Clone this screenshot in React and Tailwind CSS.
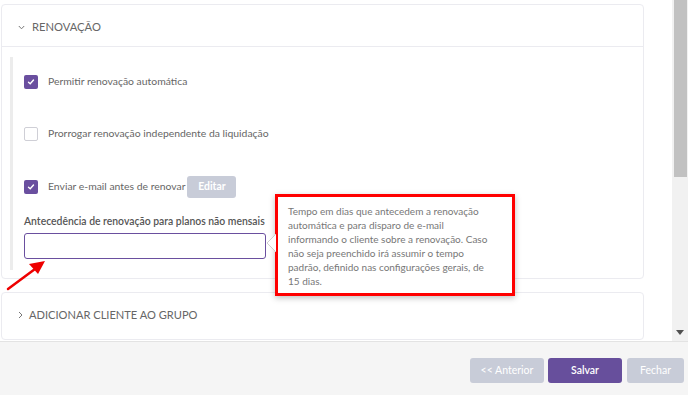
import React from "react";

function Check({ checked }) {
  if (checked) {
    return (
      <div className="w-[14px] h-[14px] rounded-[2px] bg-[#6a4f9f] flex items-center justify-center shrink-0">
        <svg width="8" height="8" viewBox="0 0 8 8">
          <path d="M1.5 4.2 L3.2 5.8 L6.5 2" stroke="white" strokeWidth="1.4" fill="none" strokeLinecap="round" />
        </svg>
      </div>
    );
  }
  return <div className="w-[14px] h-[14px] rounded-[2px] border border-[#cfcfd6] bg-white shrink-0" />;
}

export default function App() {
  return (
    <div className="w-[688px] h-[395px] flex flex-col bg-white overflow-hidden relative text-[#666]" style={{ fontFamily: "Lato, 'Open Sans', sans-serif" }}>
      <div className="h-[341px] flex flex-row">
        <div className="w-[672px] h-[341px] overflow-hidden pl-[1px] pt-[4px] flex flex-col">
          {/* Card 1 */}
          <div className="w-[643px] border border-[#ebebf0] rounded-[4px] bg-white flex flex-col">
            <div className="h-[42px] flex items-center pl-[16px] pt-[3px] border-b border-[#ebebf0]">
              <svg width="7" height="5" viewBox="0 0 7 5" className="mr-[7px]">
                <path d="M0.8 1 L3.5 3.8 L6.2 1" stroke="#777" strokeWidth="1" fill="none" />
              </svg>
              <span className="text-[11.2px] text-[#666]">RENOVAÇÃO</span>
            </div>
            <div className="pl-[8px] pt-[10px] pb-[8px]">
              <div className="border-l-[3px] border-[#ececec] pl-[11px] pt-[18px] pb-[11px] flex flex-col">
                <div className="flex items-center h-[14px]">
                  <Check checked />
                  <span className="ml-[10px] text-[10.4px] text-[#666]">Permitir renovação automática</span>
                </div>
                <div className="flex items-center h-[14px] mt-[38px]">
                  <Check />
                  <span className="ml-[10px] text-[10.4px] text-[#666]">Prorrogar renovação independente da liquidação</span>
                </div>
                <div className="flex items-center h-[22px] mt-[35px]">
                  <Check checked />
                  <span className="ml-[10px] text-[10.4px] text-[#666]">Enviar e-mail antes de renovar</span>
                  <div className="ml-[2px] w-[49px] h-[22px] rounded-[3px] bg-[#c8ccd8] text-white text-[10.4px] font-bold flex items-center justify-center">Editar</div>
                </div>
                <div className="mt-[16px] h-[14px] text-[10.4px] font-semibold text-[#555] leading-[14px] whitespace-nowrap">Antecedência de renovação para planos não mensais</div>
                <div className="mt-[5px] w-[242px] h-[26px] border border-[#6a4f9f] rounded-[3px] bg-white" />
              </div>
            </div>
          </div>
          {/* Card 2 */}
          <div className="mt-[13px] w-[643px] h-[48px] border border-[#ebebf0] rounded-[4px] bg-white flex items-center pl-[16px] pb-[2px]">
            <svg width="5" height="8" viewBox="0 0 5 8" className="mr-[6px]">
              <path d="M1 1 L4 4 L1 7" stroke="#777" strokeWidth="1" fill="none" />
            </svg>
            <span className="text-[11.1px] text-[#666]">ADICIONAR CLIENTE AO GRUPO</span>
          </div>
        </div>
        {/* Scrollbar */}
        <div className="w-[16px] h-[341px] bg-[#f1f1f1] flex flex-col items-center">
          <div className="w-[13px] h-[177px] bg-[#c1c1c1]" />
          <div className="flex-1" />
          <svg width="8" height="5" viewBox="0 0 8 5" className="mb-[6px]">
            <path d="M0 0 L8 0 L4 5 Z" fill="#505050" />
          </svg>
        </div>
      </div>
      {/* Footer */}
      <div className="flex-1 bg-[#f5f5f5] border-t border-[#e3e3e3] flex justify-end items-start pt-[16px] pr-[4px] gap-[4px]">
        <div className="w-[74px] h-[25px] rounded-[3px] bg-[#c8ccd8] text-white text-[10.5px] flex items-center justify-center">&lt;&lt; Anterior</div>
        <div className="w-[74px] h-[25px] rounded-[3px] bg-[#674f9c] text-white text-[10.5px] font-semibold flex items-center justify-center">Salvar</div>
        <div className="ml-[1px] w-[57px] h-[25px] rounded-[3px] bg-[#c8ccd8] text-white text-[10.5px] flex items-center justify-center">Fechar</div>
      </div>

      {/* Tooltip */}
      <div className="absolute left-[275px] top-[194px] w-[240px] h-[102px] border-[3px] border-[#ff0000] bg-white shadow-[0_2px_6px_rgba(0,0,0,0.25)] pl-[10px] pt-[7px] text-[10px] leading-[14px] text-[#777]">
        <div>Tempo em dias que antecedem a renovação</div>
        <div>automática e para disparo de e-mail</div>
        <div>informando o cliente sobre a renovação. Caso</div>
        <div>não seja preenchido irá assumir o tempo</div>
        <div>padrão, definido nas configurações gerais, de</div>
        <div>15 dias.</div>
      </div>
      <svg className="absolute left-[266px] top-[234px]" width="10" height="18" viewBox="0 0 10 18">
        <path d="M10 0 L1 9 L10 18" fill="white" stroke="#cfcfcf" strokeWidth="1" />
      </svg>

      {/* Red arrow */}
      <svg className="absolute left-[5px] top-[257px]" width="45" height="36" viewBox="0 0 45 36">
        <path d="M3 32 L30 12" stroke="#ee0000" strokeWidth="2.5" strokeLinecap="round" />
        <path d="M40 4 L24 7 L33 17 Z" fill="#ee0000" />
      </svg>
    </div>
  );
}
